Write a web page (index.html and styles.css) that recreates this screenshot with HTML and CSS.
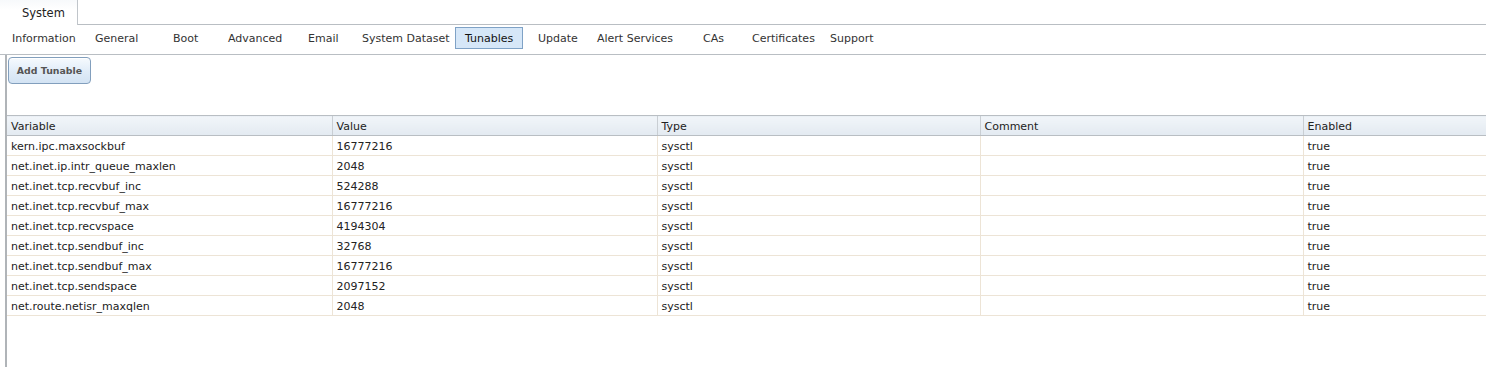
FILE: index.html
```html
<!DOCTYPE html>
<html>
<head>
<meta charset="utf-8">
<link rel="stylesheet" href="styles.css">
</head>
<body>
<div class="top-tabs">
  <div class="top-tab">System</div>
  <div class="top-fill"></div>
</div>
<nav class="subtabs">
  <span class="st st-info">Information</span>
  <span class="st st-general">General</span>
  <span class="st st-boot">Boot</span>
  <span class="st st-adv">Advanced</span>
  <span class="st st-email">Email</span>
  <span class="st st-ds">System Dataset</span>
  <span class="st st-tun active">Tunables</span>
  <span class="st st-upd">Update</span>
  <span class="st st-alert">Alert Services</span>
  <span class="st st-cas">CAs</span>
  <span class="st st-cert">Certificates</span>
  <span class="st st-sup">Support</span>
</nav>
<div class="content">
  <div class="toolbar"><button class="btn">Add Tunable</button></div>
  <div class="grid-wrap">
    <table class="grid">
      <colgroup>
        <col class="c-var"><col class="c-val"><col class="c-type"><col class="c-com"><col class="c-en">
      </colgroup>
      <thead>
        <tr><th>Variable</th><th>Value</th><th>Type</th><th>Comment</th><th>Enabled</th></tr>
      </thead>
      <tbody>
        <tr><td>kern.ipc.maxsockbuf</td><td>16777216</td><td>sysctl</td><td></td><td>true</td></tr>
        <tr><td>net.inet.ip.intr_queue_maxlen</td><td>2048</td><td>sysctl</td><td></td><td>true</td></tr>
        <tr><td>net.inet.tcp.recvbuf_inc</td><td>524288</td><td>sysctl</td><td></td><td>true</td></tr>
        <tr><td>net.inet.tcp.recvbuf_max</td><td>16777216</td><td>sysctl</td><td></td><td>true</td></tr>
        <tr><td>net.inet.tcp.recvspace</td><td>4194304</td><td>sysctl</td><td></td><td>true</td></tr>
        <tr><td>net.inet.tcp.sendbuf_inc</td><td>32768</td><td>sysctl</td><td></td><td>true</td></tr>
        <tr><td>net.inet.tcp.sendbuf_max</td><td>16777216</td><td>sysctl</td><td></td><td>true</td></tr>
        <tr><td>net.inet.tcp.sendspace</td><td>2097152</td><td>sysctl</td><td></td><td>true</td></tr>
        <tr><td>net.route.netisr_maxqlen</td><td>2048</td><td>sysctl</td><td></td><td>true</td></tr>
      </tbody>
    </table>
  </div>
</div>
</body>
</html>
```
FILE: styles.css
```css
html, body {
  margin: 0;
  padding: 0;
  background: #fff;
  overflow: hidden;
}
body {
  font-family: "DejaVu Sans", Verdana, sans-serif;
  font-size: 11px;
  color: #222;
  width: 1486px;
  height: 367px;
}
.top-tabs {
  display: flex;
  height: 25px;
}
.top-tab {
  width: 78px;
  height: 25px;
  box-sizing: border-box;
  border-right: 1px solid #c0c5ca;
  padding-left: 22px;
  line-height: 27px;
  background: linear-gradient(#f7f9fb, #fff 40%);
  font-size: 11.5px;
}
.top-fill {
  flex: 1;
  border-bottom: 1px solid #b9bec3;
}
.subtabs {
  display: flex;
  height: 27px;
  align-items: flex-start;
  padding: 2px 0 0 2px;
  border-bottom: 1px solid #b9bec3;
}
.st {
  box-sizing: border-box;
  padding-left: 10px;
  height: 22px;
  line-height: 24px;
  white-space: nowrap;
  flex: none;
  color: #333;
}
.st-info { width: 83px; }
.st-general { width: 78px; }
.st-boot { width: 55px; }
.st-adv { width: 80px; }
.st-email { width: 54px; }
.st-ds { width: 103px; }
.st-tun { width: 68px; margin-right: 5px; }
.st-upd { width: 59px; }
.st-alert { width: 106px; }
.st-cas { width: 49px; }
.st-cert { width: 78px; }
.st-sup { width: 70px; }
.st.active {
  background: #d6e7f8;
  border: 1px solid #7fa2c6;
  padding-left: 9px;
  line-height: 22px;
  color: #111;
  overflow: hidden;
}
.content {
  border-left: 2px solid #b0b4b8;
  margin-left: 5px;
  height: 312px;
}
.toolbar {
  padding: 2px 0 0 1px;
  height: 58px;
}
.btn {
  display: block;
  width: 83px;
  height: 27px;
  border: 1px solid #829fbd;
  border-radius: 4px;
  background: linear-gradient(#f6fafe, #e0ecf8 55%, #d3e3f3);
  font-family: "DejaVu Sans", Verdana, sans-serif;
  font-size: 9.4px;
  font-weight: bold;
  color: #555;
  padding: 0;
  box-shadow: inset 0 1px 0 #fff;
}
.grid-wrap {
  overflow: hidden;
  width: 1479px;
}
.grid {
  border-collapse: collapse;
  table-layout: fixed;
  width: 1619px;
}
.c-var, .c-val { width: 325px; }
.c-type, .c-com, .c-en { width: 323px; }
.grid th, .grid td {
  box-sizing: border-box;
  text-align: left;
  vertical-align: top;
  padding: 2px 0 0 4px;
  white-space: nowrap;
  overflow: hidden;
  font-weight: normal;
}
.grid th {
  height: 20px;
  line-height: 17px;
  background: linear-gradient(#f1f5f9, #e3eaf1);
  border-top: 1px solid #b9bec3;
  border-bottom: 1px solid #b9bec3;
  border-left: 1px solid #c9ced3;
  color: #222;
}
.grid th:first-child, .grid td:first-child {
  border-left: none;
}
.grid td {
  height: 20px;
  line-height: 17px;
  border-bottom: 1px solid #ede4d6;
  border-left: 1px solid #ede4d6;
}
```
